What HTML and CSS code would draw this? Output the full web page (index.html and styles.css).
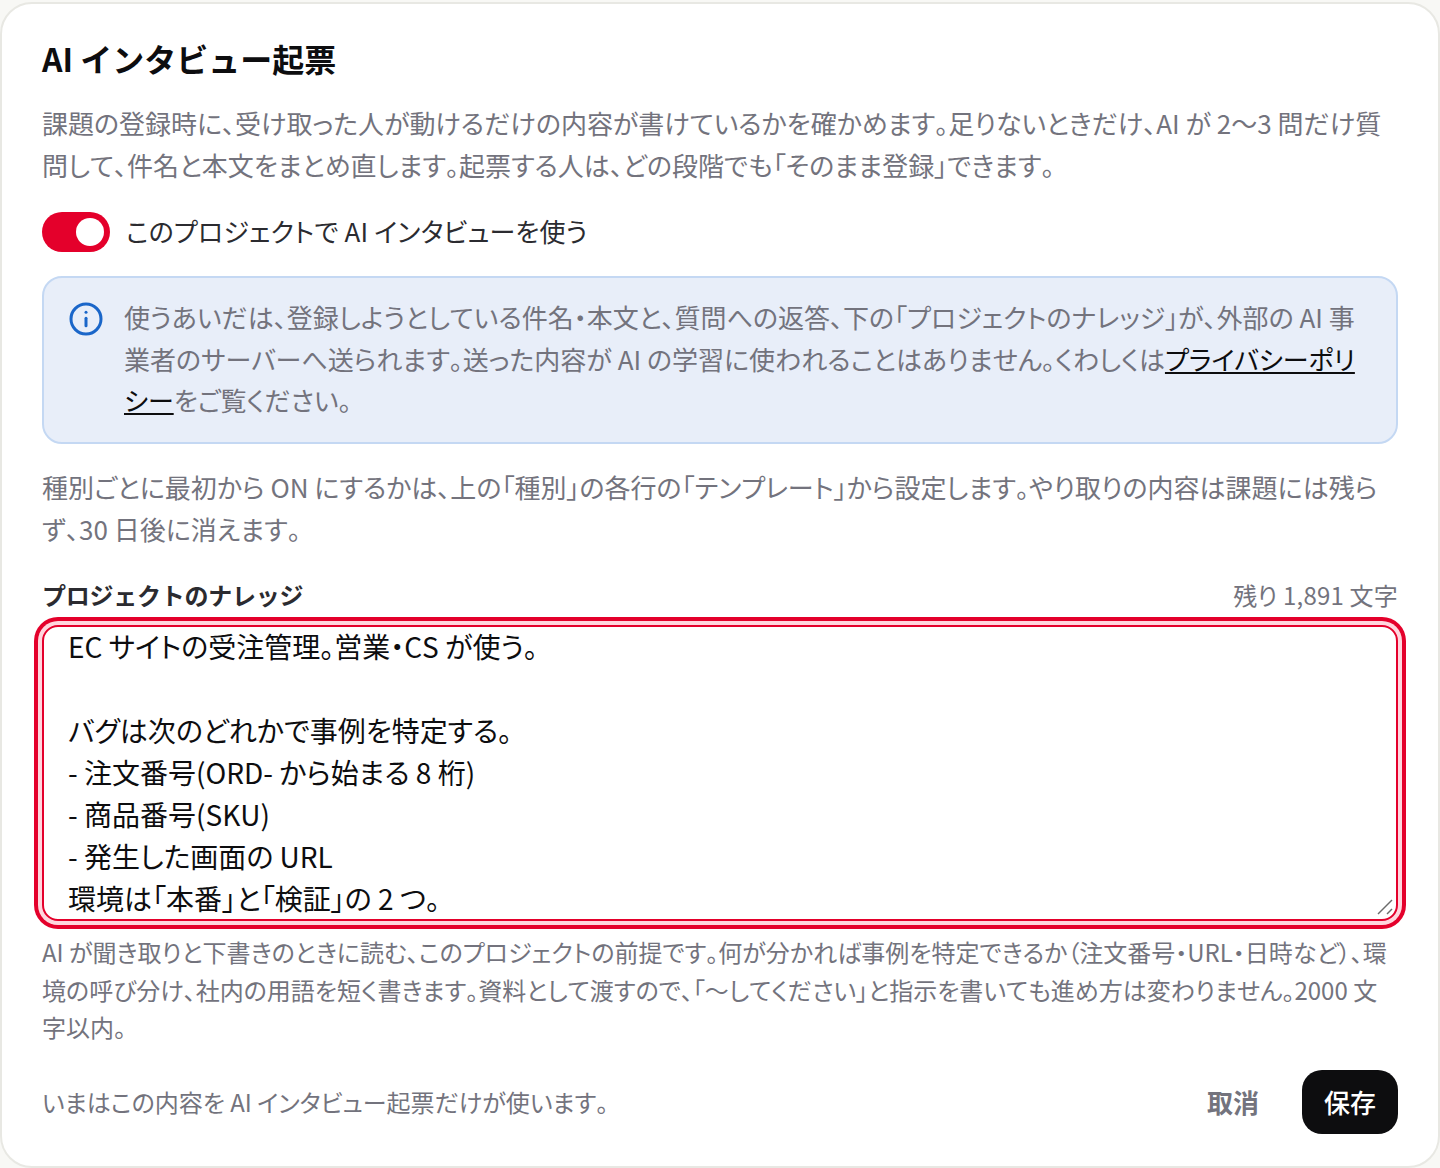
FILE: index.html
```html
<!DOCTYPE html>
<html lang="ja">
<head>
    <meta charset="UTF-8">
    <meta name="viewport" content="width=device-width, initial-scale=1.0">
    <title>AI インタビュー起票</title>
    <link rel="stylesheet" href="styles.css">
</head>
<body>
    <div class="dialog">
        <h1>AI インタビュー起票</h1>
        <p class="lead">課題の登録時に、受け取った人が動けるだけの内容が書けているかを確かめます。足りないときだけ、AI が 2〜3 問だけ質問して、件名と本文をまとめ直します。起票する人は、どの段階でも「そのまま登録」できます。</p>

        <label class="toggle-row">
            <span class="toggle"><span class="toggle-knob"></span></span>
            <span class="toggle-label">このプロジェクトで AI インタビューを使う</span>
        </label>

        <div class="notice">
            <svg class="notice-icon" viewBox="0 0 24 24" fill="none" stroke="#1a66c9" stroke-width="2" stroke-linecap="round">
                <circle cx="12" cy="12" r="10"/>
                <path d="M12 11.5v5"/>
                <path d="M12 7.5h.01"/>
            </svg>
            <p>使うあいだは、登録しようとしている件名・本文と、質問への返答、下の「プロジェクトのナレッジ」が、外部の AI 事業者のサーバーへ送られます。送った内容が AI の学習に使われることはありません。くわしくは<a href="#">プライバシーポリシー</a>をご覧ください。</p>
        </div>

        <p class="lead lead-second">種別ごとに最初から ON にするかは、上の「種別」の各行の「テンプレート」から設定します。やり取りの内容は課題には残らず、30 日後に消えます。</p>

        <div class="field-head">
            <label for="knowledge">プロジェクトのナレッジ</label>
            <span class="counter">残り 1,891 文字</span>
        </div>
        <div class="knowledge-wrap">
            <textarea id="knowledge" class="knowledge" spellcheck="false">EC サイトの受注管理。営業・CS が使う。

バグは次のどれかで事例を特定する。
- 注文番号(ORD- から始まる 8 桁)
- 商品番号(SKU)
- 発生した画面の URL
環境は「本番」と「検証」の 2 つ。</textarea>
            <svg class="resize-handle" viewBox="0 0 16 16" fill="none" stroke="#6b6b6b" stroke-width="1.4">
                <path d="M1 15 15 1"/>
                <path d="M10 15l5-5"/>
            </svg>
        </div>
        <p class="hint">AI が聞き取りと下書きのときに読む、このプロジェクトの前提です。何が分かれば事例を特定できるか（注文番号・URL・日時など）、環境の呼び分け、社内の用語を短く書きます。資料として渡すので、「〜してください」と指示を書いても進め方は変わりません。2000 文字以内。</p>

        <div class="footer">
            <span class="footer-note">いまはこの内容を AI インタビュー起票だけが使います。</span>
            <div class="actions">
                <button class="btn-cancel">取消</button>
                <button class="btn-save">保存</button>
            </div>
        </div>
    </div>
<script>
    // the textarea sits a little scrolled, as if the caret was at the end
    document.getElementById('knowledge').scrollTop = 2;
</script>
</body>
</html>
```

FILE: styles.css
```css
:root {
    --red: #e4002b;
    --ink: #0d0d0f;
    --muted: #73737d;
    --line: #e8e8e3;
}

* {
    box-sizing: border-box;
}

html, body {
    margin: 0;
    height: 100%;
}

body {
    font-family: "Noto Sans CJK JP", "Noto Sans", sans-serif;
    font-feature-settings: "palt";
    font-kerning: none;
    background: #f8f8f5;
    color: var(--ink);
}

.dialog {
    height: 1166px;
    margin-top: 2px;
    padding: 32px 40px 0;
    background: #fff;
    border: 2px solid var(--line);
    border-radius: 32px;
}

h1 {
    margin: 0;
    font-size: 32px;
    line-height: 44px;
    font-weight: 700;
    font-feature-settings: normal;
}

.lead {
    margin: 22px 0 0;
    font-size: 26px;
    line-height: 42px;
    color: var(--muted);
}

.toggle-row {
    display: flex;
    align-items: center;
    gap: 16px;
    margin-top: 26px;
    font-size: 26px;
    line-height: 38px;
    letter-spacing: 0.17px;
    color: #2b2b30;
}

.toggle-label {
    padding-bottom: 2px;
}

.toggle {
    display: flex;
    justify-content: flex-end;
    align-items: center;
    width: 68px;
    height: 40px;
    padding: 6px;
    border-radius: 20px;
    background: var(--red);
}

.toggle-knob {
    width: 28px;
    height: 28px;
    border-radius: 50%;
    background: #fff;
}

.notice {
    display: flex;
    gap: 20px;
    margin-top: 24px;
    padding: 18px 24px 21.5px;
    background: #e8eef9;
    border: 2px solid #c4d8f3;
    border-radius: 20px;
}

.notice-icon {
    flex: none;
    width: 36px;
    height: 36px;
    margin-top: 5px;
}

.notice p {
    margin: 0;
    font-size: 26px;
    line-height: 41.6px;
    color: var(--muted);
}

.notice a {
    color: var(--ink);
    text-decoration: underline;
}

.lead.lead-second {
    margin-top: 22px;
}

.field-head {
    display: flex;
    justify-content: space-between;
    align-items: center;
    margin-top: 27px;
    font-size: 24px;
    line-height: 36px;
}

.field-head label {
    font-weight: 700;
    font-feature-settings: normal;
    letter-spacing: -0.25px;
    color: #2b2b30;
}

.counter {
    letter-spacing: 0.2px;
    color: var(--muted);
}

.knowledge-wrap {
    position: relative;
    margin-top: 12px;
}

.knowledge {
    display: block;
    width: 100%;
    height: 296px;
    padding: 0 24px;
    font: inherit;
    font-size: 28px;
    line-height: 42px;
    color: var(--ink);
    background: #fff;
    border: 2px solid var(--red);
    border-radius: 16px;
    outline: none;
    resize: none;
    overflow: hidden;
    box-shadow: 0 0 0 4px #ffd6de, 0 0 0 8px var(--red);
}

.resize-handle {
    position: absolute;
    right: 5px;
    bottom: 6px;
    width: 16px;
    height: 16px;
}

.hint {
    margin: 12px 0 0;
    font-size: 24px;
    line-height: 37.5px;
    color: var(--muted);
}

.footer {
    display: flex;
    justify-content: space-between;
    align-items: center;
    margin-top: 24px;
}

.footer-note {
    font-size: 24px;
    color: var(--muted);
}

.actions {
    display: flex;
    align-items: center;
    gap: 21px;
}

.btn-cancel,
.btn-save {
    height: 64px;
    padding: 0 22px;
    font: inherit;
    font-size: 26px;
    font-weight: 500;
    border: none;
    border-radius: 20px;
}

.btn-cancel {
    font-weight: 700;
    background: transparent;
    color: var(--muted);
}

.btn-save {
    background: var(--ink);
    color: #fff;
}
```
